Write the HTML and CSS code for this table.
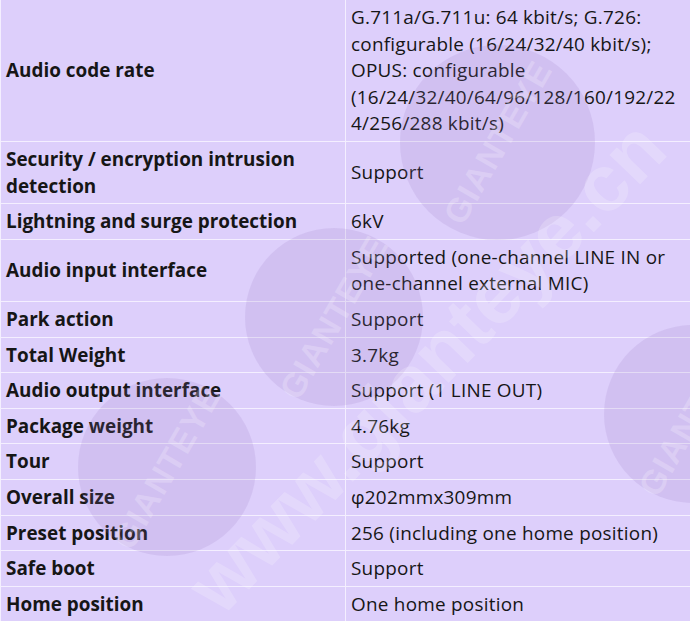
FILE: index.html
```html
<!DOCTYPE html>
<html>
<head>
<meta charset="utf-8">
<link rel="stylesheet" href="styles.css">
</head>
<body>
<div class="wrap">
<table class="spec">
<tr><th>Audio code rate</th><td>G.711a/G.711u: 64 kbit/s; G.726: configurable (16/24/32/40 kbit/s); OPUS: configurable (16/24/32/40/64/96/128/160/192/224/256/288 kbit/s)</td></tr>
<tr><th>Security / encryption intrusion detection</th><td>Support</td></tr>
<tr><th>Lightning and surge protection</th><td>6kV</td></tr>
<tr><th>Audio input interface</th><td>Supported (one-channel LINE IN or one-channel external MIC)</td></tr>
<tr><th>Park action</th><td>Support</td></tr>
<tr><th>Total Weight</th><td>3.7kg</td></tr>
<tr><th>Audio output interface</th><td>Support (1 LINE OUT)</td></tr>
<tr><th>Package weight</th><td>4.76kg</td></tr>
<tr><th>Tour</th><td>Support</td></tr>
<tr><th>Overall size</th><td>φ202mmx309mm</td></tr>
<tr><th>Preset position</th><td>256 (including one home position)</td></tr>
<tr><th>Safe boot</th><td>Support</td></tr>
<tr><th>Home position</th><td>One home position</td></tr>
</table>
<div class="mark">
  <div class="disc d1"><span>GIANTEYE</span></div>
  <div class="disc d2"><span>GIANTEYE</span></div>
  <div class="disc d3"><span>GIANTEYE</span></div>
  <div class="disc d4"><span>GIANTEYE</span></div>
  <div class="url">www.gianteye.cn</div>
</div>
</div>
</body>
</html>
```
FILE: styles.css
```css
html, body { margin: 0; padding: 0; background: #ddcffb; }
body { overflow: hidden; }
.wrap { position: relative; width: 690px; height: 621px; overflow: hidden; }
.spec {
  border-collapse: collapse;
  width: 691px;
  table-layout: fixed;
  background: #ddcffb;
  font-family: "Open Sans", "Noto Sans", sans-serif;
  font-size: 18.9px;
  line-height: 26.6px;
  color: #161616;
}
.spec th, .spec td {
  border: 1px solid #f4efff;
  padding: 4px 5px;
  vertical-align: middle;
  text-align: left;
  width: 50%;
  overflow-wrap: anywhere;
}
.spec td { letter-spacing: 0.25px; }
.spec tr:first-child th, .spec tr:first-child td { border-top: none; }
.spec th { font-weight: 700; }
.mark { position: absolute; inset: 0; pointer-events: none; }
.disc {
  position: absolute;
  border-radius: 50%;
  background: rgba(150, 120, 190, 0.16);
  display: flex; align-items: center; justify-content: center;
}
.disc span {
  font-family: "Liberation Sans", sans-serif;
  font-weight: 700;
  font-size: 34px;
  color: rgba(255, 255, 255, 0.22);
  transform: rotate(-60deg);
  letter-spacing: 1px;
}
.d1 { left: 400px; top: 45px; width: 195px; height: 195px; }
.d2 { left: 245px; top: 228px; width: 178px; height: 178px; }
.d3 { left: 78px; top: 378px; width: 178px; height: 178px; }
.d4 { left: 604px; top: 325px; width: 178px; height: 178px; }
.url {
  position: absolute;
  left: 112px; top: 340px;
  width: 590px;
  text-align: center;
  font-family: "Liberation Sans", sans-serif;
  font-weight: 700;
  font-size: 80px;
  line-height: 94px;
  color: rgba(255, 255, 255, 0.2);
  transform: rotate(-46deg);
  white-space: nowrap;
}
```
